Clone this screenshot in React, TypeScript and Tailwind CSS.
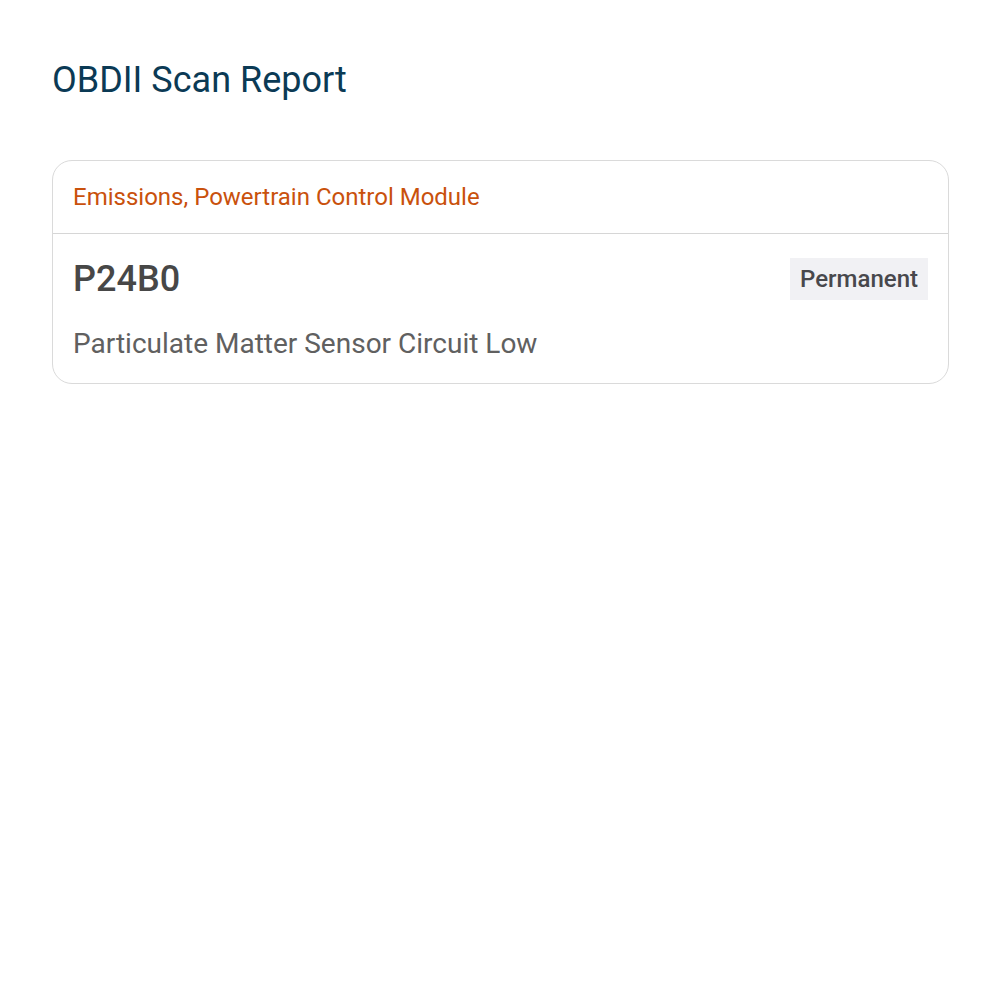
import React from "react";

interface TroubleCode {
  code: string;
  status: string;
  description: string;
}

const codes: TroubleCode[] = [
  {
    code: "P24B0",
    status: "Permanent",
    description: "Particulate Matter Sensor Circuit Low",
  },
];

const App: React.FC = () => {
  return (
    <div
      className="min-h-screen bg-white pl-[52px] pr-[51px] pt-[58px]"
      style={{ fontFamily: "Roboto, 'Noto Sans', sans-serif" }}
    >
      <h1 className="text-[36px] leading-[44px] text-[#0b3a55]">OBDII Scan Report</h1>

      {/* Module card */}
      <div className="mt-[58px] rounded-[20px] border border-[#dadada]">
        <div className="flex h-[73px] items-center border-b border-[#d6d6d6] px-5">
          <span className="text-[24px] text-[#c9510c]">Emissions, Powertrain Control Module</span>
        </div>
        {codes.map((c) => (
          <div key={c.code} className="px-5 pt-6 pb-[21px]">
            <div className="flex items-center justify-between">
              <span className="text-[36px] font-medium leading-[42px] text-[#474747]">{c.code}</span>
              <span className="bg-[#f1f1f4] px-[10px] py-[6px] text-[24px] font-medium leading-[30px] text-[#48484c]">
                {c.status}
              </span>
            </div>
            <p className="mt-[26px] text-[28px] leading-[36px] text-[#606060]">{c.description}</p>
          </div>
        ))}
      </div>
    </div>
  );
};

export default App;
